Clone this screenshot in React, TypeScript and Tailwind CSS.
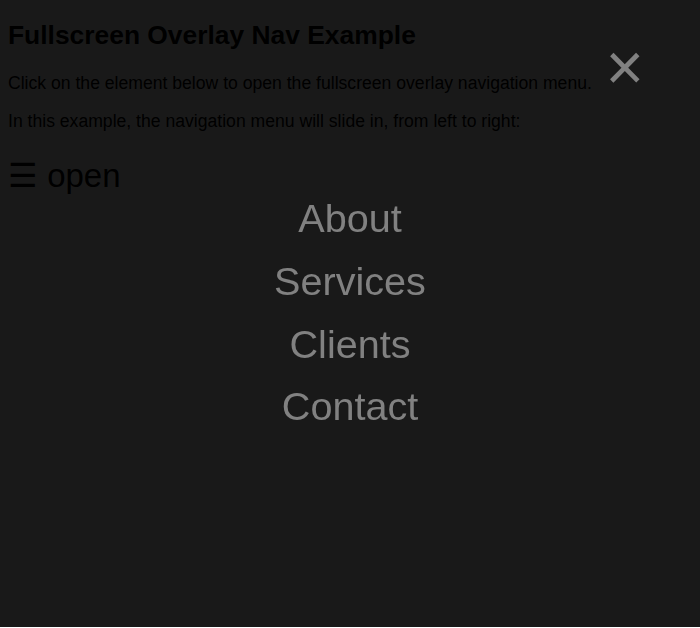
export default function App() {
  const link = "block py-[8.6px] px-[8.8px] text-[39.6px] leading-[45.5px] text-[#818181] no-underline";
  return (
    <div className="min-h-[628px] bg-white text-black px-2 pt-[20px]" style={{ fontFamily: '"Liberation Sans", Arial, sans-serif' }}>
      <h2 className="text-[26.4px] font-bold mt-0 mb-[22.6px] leading-[30px]">Fullscreen Overlay Nav Example</h2>
      <p className="text-[17.6px] mt-0 mb-[18.6px] leading-[20.2px]">Click on the element below to open the fullscreen overlay navigation menu.</p>
      <p className="text-[17.6px] m-0 leading-[20.2px]">In this example, the navigation menu will slide in, from left to right:</p>
      <div className="mt-[25px] text-[33px] leading-[38px] cursor-pointer">&#9776; open</div>

      <div className="fixed top-0 left-0 z-10 w-full h-[627px] bg-[rgba(0,0,0,0.9)] overflow-x-hidden">
        <a href="#" className="absolute top-[30px] right-[56px] text-[66px] leading-[1.15] p-0 text-[#818181] no-underline">&times;</a>
        <div className="relative top-[25%] w-full text-center mt-[31px]">
          <a href="#" className={link}>About</a>
          <a href="#" className={link}>Services</a>
          <a href="#" className={link}>Clients</a>
          <a href="#" className={link}>Contact</a>
        </div>
      </div>
    </div>
  );
}
